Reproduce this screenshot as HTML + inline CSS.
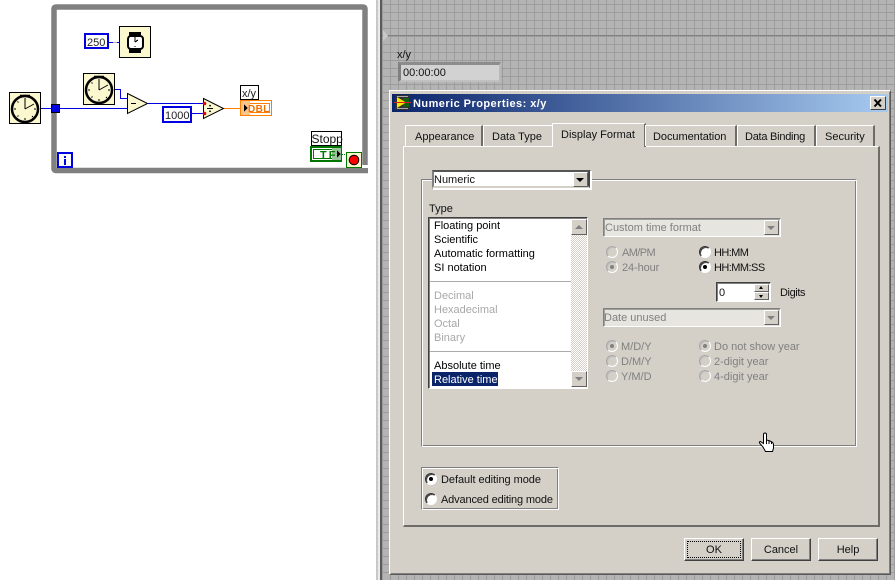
<!DOCTYPE html>
<html><head><meta charset="utf-8"><style>
html,body{margin:0;padding:0;background:#fff}
#p{position:relative;width:895px;height:580px;overflow:hidden;background:#fff;font:11px/14px "Liberation Sans",sans-serif;color:#000}
#p div,#p span.t{position:absolute;box-sizing:border-box}
.t{position:absolute;white-space:nowrap;line-height:14px;font-size:11px;color:#000;margin-top:1px}
.g{color:#808080}
.lg{color:#a8a8a8}
.r{width:12px;height:12px;border-radius:50%;background:#fff;border:1px solid;border-color:#303030 #fff #fff #303030;box-shadow:inset 1px 1px 0 #404040}
.r.d{background:#d4d0c8;border-color:#a8a8a8 #fff #fff #a8a8a8;box-shadow:inset 1px 1px 0 #c0c0c0}
.r.on::after{content:"";position:absolute;left:3px;top:3px;width:4px;height:4px;border-radius:50%;background:#000}
.r.d.on::after{background:#808080}
.tab{background:#d4d0c8;border-top:1px solid #fff;border-left:1px solid #fff;border-right:2px solid #6e6c66}
.btn{background:#d4d0c8;border:1px solid;border-color:#fff #404040 #404040 #fff;box-shadow:inset -1px -1px 0 #808080;text-align:center;line-height:22px;height:23px;width:60px}
.cb{background:#e6e5e0;border:1px solid;border-color:#808080 #fff #fff #808080;box-shadow:inset 1px 1px 0 #a0a09a}
.arr{background:#d4d0c8;border:1px solid;border-color:#fff #606060 #606060 #fff}
.tri{width:0;height:0;border-left:4px solid transparent;border-right:4px solid transparent;border-top:4px solid #000}
</style></head><body><div id="p">

<svg style="position:absolute;left:0;top:0" width="378" height="180" font-family="Liberation Sans,sans-serif" font-size="11" shape-rendering="crispEdges">
<!-- loop -->
<path shape-rendering="auto" fill="none" stroke="#808080" stroke-width="5.5" d="M54 170.500V9Q54 7 56 7H363Q365 7 365 9V165M54 168Q54 170.500 56 170.500H368"/>
<rect x="362" y="165" width="6" height="3" fill="#fff"/>
<!-- wires -->
<g fill="none" stroke="#0000e0" stroke-width="1">
<path d="M41 108.500H127M115 89.500H120.500V98.500H127M148 103.500H203M192 113.500H203M109 42.500H119"/>
</g>
<path d="M113 42.500H117" stroke="#b0b0c8" stroke-width="1"/>
<path d="M224 108.500H240" stroke="#ff8000" stroke-width="1"/>
<path d="M342 154.500H346" stroke="#008000" stroke-width="1" stroke-dasharray="1 1"/>
<rect x="51.500" y="104.500" width="8" height="8" fill="#0000e0" stroke="#000"/>
<!-- constants -->
<rect x="85" y="34" width="23" height="14" fill="#fff" stroke="#0000e0" stroke-width="2"/>
<text x="87" y="46" fill="#222">250</text>
<rect x="163" y="107" width="28" height="15" fill="#fff" stroke="#0000e0" stroke-width="2"/>
<text x="165" y="119" fill="#222">1000</text>
<!-- timers -->
<g id="tm">
<rect x="9.500" y="92.500" width="31" height="31" fill="#fbf8cf" stroke="#000"/>
<g shape-rendering="auto" fill="none" stroke="#000">
<path d="M20 95.500H30M25 95.500V97" stroke-width="1.500"/>
<circle cx="25" cy="109" r="13" fill="#fbf8cf" stroke-width="2.500"/>
<path d="M25 109V100M25 109L34 104" stroke-width="1"/>
<path d="M25 98v2M25 118v2M14 109h2M34 109h2M17.500 101.500l1 1M32 116l1 1M17.500 116.500l1-1" stroke-width="1"/>
</g>
</g>
<g transform="translate(74,-19)">
<rect x="9.500" y="92.500" width="31" height="31" fill="#fbf8cf" stroke="#000"/>
<g shape-rendering="auto" fill="none" stroke="#000">
<path d="M20 95.500H30M25 95.500V97" stroke-width="1.500"/>
<circle cx="25" cy="109" r="13" fill="#fbf8cf" stroke-width="2.500"/>
<path d="M25 109V100M25 109L34 104" stroke-width="1"/>
<path d="M25 98v2M25 118v2M14 109h2M34 109h2M17.500 101.500l1 1M32 116l1 1M17.500 116.500l1-1" stroke-width="1"/>
</g>
</g>
<!-- wait -->
<rect x="119.500" y="26.500" width="31" height="31" fill="#fbf8cf" stroke="#000"/>
<rect x="129" y="32" width="12" height="21" fill="#000"/>
<rect x="128" y="36" width="15" height="13" rx="3" fill="#fff" stroke="#000" stroke-width="2" shape-rendering="auto"/>
<path d="M135 37v5M135 42l3-2M135 46v1" stroke="#000" stroke-width="1"/>
<!-- subtract -->
<g shape-rendering="auto">
<path d="M127.500 93.500L147.500 103.500L127.500 113.500Z" fill="#fbf8cf" stroke="#000"/>
<path d="M131 103.500h5" stroke="#000"/>
<path d="M203.500 98.500L223.500 108.500L203.500 118.500Z" fill="#fbf8cf" stroke="#000"/>
<circle cx="204.500" cy="103.500" r="1.800" fill="#e00000"/>
<circle cx="204.500" cy="113.500" r="1.800" fill="#e00000"/>
<path d="M207 108.500h6" stroke="#000"/>
<circle cx="210" cy="105.700" r=".9"/><circle cx="210" cy="111.300" r=".9"/>
</g>
<!-- indicator -->
<rect x="240.500" y="85.500" width="18" height="14" fill="#fff" stroke="#000"/>
<text x="242" y="97" fill="#222">x/y</text>
<rect x="240.500" y="100.500" width="31" height="15" fill="#fff" stroke="#ff8000"/>
<rect x="242.500" y="103.500" width="27" height="9" fill="#fff" stroke="#ff8000"/>
<rect x="241" y="101" width="9" height="14" fill="#ffc48a"/>
<path d="M244 104.500L248 108L244 111.500Z" fill="#000"/>
<text x="248" y="112" fill="#f07000" font-weight="bold" font-size="10" letter-spacing=".4">DBL</text>
<!-- stopp -->
<rect x="311.500" y="131.500" width="30" height="14" fill="#fff" stroke="#000"/>
<text x="311.500" y="143" font-size="12" fill="#111">Stopp</text>
<rect x="311" y="147" width="30" height="14" fill="#fff" stroke="#007800" stroke-width="2"/>
<rect x="313.500" y="149.500" width="25" height="9" fill="#fff" stroke="#007800"/>
<rect x="332" y="148" width="9" height="12" fill="#9cc49c"/>
<text x="320" y="158.500" fill="#007800" font-weight="bold" font-size="11" letter-spacing="2">TF</text>
<path d="M337 150.500L341 154L337 157.500Z" fill="#000"/>
<rect x="346.500" y="152.500" width="15" height="15" fill="#fbf8cf" stroke="#007800"/>
<circle cx="354" cy="160" r="4.800" fill="#f00" stroke="#000" stroke-width="1" shape-rendering="auto"/>
<!-- i -->
<rect x="58" y="153" width="14" height="14" fill="#fff" stroke="#0000e0" stroke-width="2"/>
<rect x="64" y="156" width="2" height="2" fill="#0000e0"/>
<rect x="64" y="159" width="2" height="6" fill="#0000e0"/>
</svg>

<!-- separator -->
<div style="left:376px;top:0;width:2px;height:580px;background:#c8c8c8"></div>
<div style="left:378px;top:0;width:2px;height:580px;background:#ebebeb"></div>
<div style="left:380px;top:0;width:2px;height:580px;background:#5a5a5a"></div>
<!-- grid -->
<div style="left:382px;top:0;width:513px;height:580px;background-color:#b4b4b4;background-image:linear-gradient(to right,#9c9c9c 1px,transparent 1px),linear-gradient(to bottom,#9c9c9c 1px,transparent 1px);background-size:8px 8px;background-position:0 4px"></div>
<div style="left:382px;top:35px;width:513px;height:1px;background:#808080"></div>
<svg style="position:absolute;left:382px;top:30px" width="8" height="12"><path d="M1 0L6 6L1 11Z" fill="#c8c8c8"/></svg>
<!-- readout -->
<span class="t" style="left:397px;top:47px;color:#111">x/y</span>
<div style="left:398px;top:62px;width:103px;height:20px;background:#9a9a9a;border-top:3px solid #8c8c8c;border-left:3px solid #808080;border-right:2px solid #b8b8b8;border-bottom:2px solid #c0c0c0"></div>
<div style="left:401px;top:65px;width:98px;height:15px;background:#d2d2d2"></div>
<span class="t" style="left:403px;top:65px;font-size:11px;color:#111">00:00:00</span>

<!-- dialog -->
<div style="left:389px;top:90px;width:502px;height:485px;background:#d4d0c8;border:1px solid;border-color:#fff #5a5a5a #5a5a5a #fff;box-shadow:inset 1px 1px 0 #d4d0c8,inset -1px -1px 0 #808080"></div>
<div style="left:392px;top:94px;width:496px;height:18px;background:linear-gradient(to right,#0a246a,#a6caf0)"></div>
<svg style="position:absolute;left:394px;top:94px" width="18" height="18" shape-rendering="crispEdges">
<rect x="1" y="1" width="15" height="15" fill="#303030"/>
<rect x="3" y="2" width="11" height="1" fill="#aaa" /><rect x="3" y="14" width="11" height="1" fill="#aaa"/>
<rect x="9" y="4" width="6" height="9" fill="#106010"/>
<path d="M3 3L12 8.500L3 14Z" fill="#f8e800" shape-rendering="auto"/>
<rect x="0" y="8" width="17" height="1" fill="#e02020"/>
</svg>
<span class="t" style="left:413px;top:96px;color:#fff;font-weight:bold;letter-spacing:.45px">Numeric Properties: x/y</span>
<div style="left:870px;top:96px;width:16px;height:14px;background:#d4d0c8;border:1px solid;border-color:#fff #404040 #404040 #fff"></div>
<svg style="position:absolute;left:870px;top:96px" width="16" height="14"><path d="M4.500 3.500L11 10.500M11 3.500L4.500 10.500" stroke="#000" stroke-width="2"/></svg>

<!-- panel -->
<div style="left:403px;top:146px;width:477px;height:381px;background:#d4d0c8;border:1px solid;border-color:#fff #6e6c66 #6e6c66 #fff;border-width:1px 2px 2px 1px"></div>
<div class="tab" style="left:405px;top:125px;width:78px;height:21px"></div>
<span class="t" style="left:415px;top:129px;color:#111">Appearance</span>
<div class="tab" style="left:483px;top:125px;width:70px;height:21px;border-right:none"></div>
<span class="t" style="left:492px;top:129px;color:#111">Data Type</span>
<div class="tab" style="left:552px;top:123px;width:94px;height:24px"></div>
<span class="t" style="left:561px;top:127px;color:#111">Display Format</span>
<div class="tab" style="left:645px;top:125px;width:92px;height:21px"></div>
<span class="t" style="left:653px;top:129px;color:#111;letter-spacing:-.05px">Documentation</span>
<div class="tab" style="left:737px;top:125px;width:79px;height:21px"></div>
<span class="t" style="left:745px;top:129px;color:#111;letter-spacing:-.25px">Data Binding</span>
<div class="tab" style="left:816px;top:125px;width:59px;height:21px"></div>
<span class="t" style="left:825px;top:129px;color:#111">Security</span>

<!-- group -->
<div style="left:421px;top:179px;width:436px;height:268px;border:1px solid #808080;border-right-color:#fff;border-bottom-color:#fff;box-shadow:inset 1px 1px 0 #fff,inset -1px -1px 0 #808080"></div>

<!-- numeric combo -->
<div style="left:432px;top:170px;width:159px;height:19px;background:#fff;border:1px solid #fff;border-top-color:#404040;border-left-color:#404040;box-shadow:1px 1px 0 #fff"></div>
<div style="left:432px;top:170px;width:158px;height:18px;border:2px solid #555;border-right-color:#444;border-bottom-color:#d4d0c8;border-left-color:#808080"></div>
<span class="t" style="left:434px;top:172px;color:#111">Numeric</span>
<div class="arr" style="left:573px;top:172px;width:15px;height:15px"></div>
<div class="tri" style="left:576px;top:178px"></div>

<!-- list -->
<span class="t" style="left:429px;top:201px;color:#111">Type</span>
<div style="left:428px;top:217px;width:160px;height:172px;background:#fff;border:1px solid;border-color:#404040 #fff #fff #404040;box-shadow:inset 1px 1px 0 #808080"></div>
<div style="left:571px;top:219px;width:16px;height:168px;background-color:#e8e6e2;background-image:repeating-conic-gradient(#d4d0c8 0 25%,#fff 0 50%);background-size:2px 2px"></div>
<div class="arr" style="left:571px;top:219px;width:16px;height:16px"></div>
<div class="tri" style="left:575px;top:225px;border-top:none;border-bottom:4px solid #808080"></div>
<div class="arr" style="left:571px;top:371px;width:16px;height:16px"></div>
<div class="tri" style="left:575px;top:377px;border-top:4px solid #808080"></div>
<div style="left:430px;top:281px;width:141px;height:1px;background:#aaa"></div>
<div style="left:430px;top:351px;width:141px;height:1px;background:#aaa"></div>
<div style="left:432px;top:372px;width:66px;height:14px;background:#0a246a"></div>
<span class="t" style="left:434px;top:218px">Floating point</span>
<span class="t" style="left:434px;top:232px">Scientific</span>
<span class="t" style="left:434px;top:246px">Automatic formatting</span>
<span class="t" style="left:434px;top:260px">SI notation</span>
<span class="t lg" style="left:434px;top:288px">Decimal</span>
<span class="t lg" style="left:434px;top:302px">Hexadecimal</span>
<span class="t lg" style="left:434px;top:316px">Octal</span>
<span class="t lg" style="left:434px;top:330px">Binary</span>
<span class="t" style="left:434px;top:358px">Absolute time</span>
<span class="t" style="left:434px;top:372px;color:#fff">Relative time</span>

<!-- right combos -->
<div class="cb" style="left:603px;top:218px;width:178px;height:19px"></div>
<span class="t g" style="left:605px;top:220px">Custom time format</span>
<div class="arr" style="left:764px;top:220px;width:15px;height:15px"></div>
<div class="tri" style="left:767px;top:226px;border-top-color:#808080"></div>
<div class="cb" style="left:603px;top:308px;width:178px;height:19px"></div>
<span class="t g" style="left:604px;top:310px">Date unused</span>
<div class="arr" style="left:764px;top:310px;width:15px;height:15px"></div>
<div class="tri" style="left:767px;top:316px;border-top-color:#808080"></div>

<!-- radios -->
<div class="r d" style="left:606px;top:246px"></div><span class="t g" style="left:622px;top:245px;letter-spacing:-.6px">AM/PM</span>
<div class="r d on" style="left:606px;top:261px"></div><span class="t g" style="left:622px;top:260px;letter-spacing:-.1px">24-hour</span>
<div class="r" style="left:699px;top:246px"></div><span class="t" style="left:714px;top:245px;color:#111;letter-spacing:-.6px">HH:MM</span>
<div class="r on" style="left:699px;top:261px"></div><span class="t" style="left:714px;top:260px;color:#111;letter-spacing:-.55px">HH:MM:SS</span>

<!-- digits -->
<div style="left:716px;top:282px;width:55px;height:20px;background:#fff;border:1px solid;border-color:#404040 #fff #fff #404040;box-shadow:inset 1px 1px 0 #808080"></div>
<span class="t" style="left:719px;top:285px;color:#111">0</span>
<div class="arr" style="left:754px;top:284px;width:15px;height:8px"></div>
<div class="arr" style="left:754px;top:292px;width:15px;height:8px"></div>
<div class="tri" style="left:759px;top:286px;border-width:0 2.500px 3px;border-top:none;border-bottom:3px solid #000"></div>
<div class="tri" style="left:759px;top:295px;border-width:3px 2.500px 0"></div>
<span class="t" style="left:780px;top:285px;color:#111;letter-spacing:-.4px">Digits</span>

<div class="r d on" style="left:606px;top:340px"></div><span class="t g" style="left:621px;top:339px">M/D/Y</span>
<div class="r d" style="left:606px;top:355px"></div><span class="t g" style="left:621px;top:354px">D/M/Y</span>
<div class="r d" style="left:606px;top:370px"></div><span class="t g" style="left:621px;top:369px">Y/M/D</span>
<div class="r d on" style="left:699px;top:340px"></div><span class="t g" style="left:714px;top:339px">Do not show year</span>
<div class="r d" style="left:699px;top:355px"></div><span class="t g" style="left:714px;top:354px">2-digit year</span>
<div class="r d" style="left:699px;top:370px"></div><span class="t g" style="left:714px;top:369px">4-digit year</span>

<!-- editing mode -->
<div style="left:421px;top:467px;width:138px;height:43px;border:1px solid #808080;border-right-color:#fff;border-bottom-color:#fff;box-shadow:inset 1px 1px 0 #fff,inset -1px -1px 0 #808080"></div>
<div class="r on" style="left:425px;top:473px"></div><span class="t" style="left:441px;top:472px;color:#111;letter-spacing:-.05px">Default editing mode</span>
<div class="r" style="left:425px;top:493px"></div><span class="t" style="left:441px;top:492px;color:#111;letter-spacing:-.15px">Advanced editing mode</span>

<!-- buttons -->
<div class="btn" style="left:684px;top:538px;color:#111">OK</div>
<div style="left:687px;top:541px;width:54px;height:17px;border:1px dotted #000"></div>
<div class="btn" style="left:751px;top:538px;color:#111">Cancel</div>
<div class="btn" style="left:818px;top:538px;color:#111">Help</div>

<!-- cursor -->
<svg style="position:absolute;left:757px;top:432px" width="18" height="22">
<path d="M6.500 2.500Q6.500 1 8 1T9.500 2.500V8L11.500 8.500 13 9 15 10Q16.500 11 16.500 13V16L15.500 19.500H8.500L6 15 2.500 11Q2 9.500 3.500 9.500L6.500 11.500Z" fill="#fff" stroke="#000"/>
<path d="M9.500 8V12M12 9V12M14.500 10V12" stroke="#000"/>
</svg>
</div></body></html>
